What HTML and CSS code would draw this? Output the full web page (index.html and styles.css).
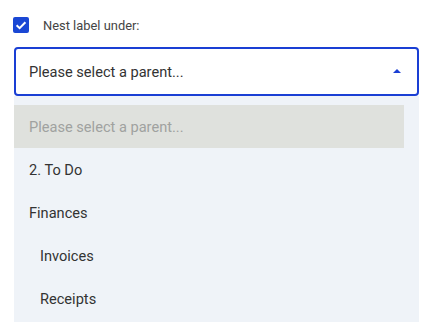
FILE: index.html
```html
<!DOCTYPE html>
<html>
<head>
<meta charset="utf-8">
<link rel="stylesheet" href="styles.css">
</head>
<body>
<div class="page">
  <div class="check-row">
    <span class="checkbox">
      <svg width="16" height="16" viewBox="0 0 16 16"><path d="M3.6 8.2 L6.6 11.1 L12.4 5.2" fill="none" stroke="#fff" stroke-width="2"/></svg>
    </span>
    <span class="check-label">Nest label under:</span>
  </div>
  <div class="select">
    <span class="select-text">Please select a parent...</span>
    <svg class="caret" width="8" height="4" viewBox="0 0 8 4"><path d="M0 4 L4 0 L8 4 Z" fill="#1a3fd4"/></svg>
  </div>
  <div class="list">
    <div class="option option-placeholder">Please select a parent...</div>
    <div class="option">2. To Do</div>
    <div class="option">Finances</div>
    <div class="option option-child">Invoices</div>
    <div class="option option-child">Receipts</div>
  </div>
</div>
</body>
</html>
```
FILE: styles.css
```css
html, body {
  margin: 0;
  padding: 0;
  background: #ffffff;
  font-family: Roboto, "Liberation Sans", sans-serif;
}
.page {
  padding: 17px 0 0 14px;
}
.check-row {
  display: flex;
  align-items: center;
  height: 16px;
}
.checkbox {
  width: 16px;
  height: 16px;
  margin-left: -1px;
  background: #1a47d4;
  border-radius: 2px;
  display: flex;
}
.check-label {
  margin-left: 14px;
  font-size: 12.9px;
  color: #444;
}
.select {
  box-sizing: border-box;
  margin-top: 14px;
  width: 405px;
  height: 49px;
  border: 2px solid #1a3fd4;
  border-radius: 4px;
  display: flex;
  align-items: center;
  padding: 0 16px 0 13px;
}
.select-text {
  flex: 1;
  font-size: 14.6px;
  color: #333;
}
.caret {
  display: block;
  margin-bottom: 2px;
}
.list {
  width: 405px;
  box-sizing: border-box;
  background: #eff3f8;
  padding: 9px 15px 10px 0;
}
.option {
  height: 43px;
  display: flex;
  align-items: center;
  padding-left: 15px;
  font-size: 14.6px;
  color: #333;
}
.option-placeholder {
  background: #dfe1dd;
  color: #a0a2a0;
}
.option-child {
  padding-left: 26px;
}
```
